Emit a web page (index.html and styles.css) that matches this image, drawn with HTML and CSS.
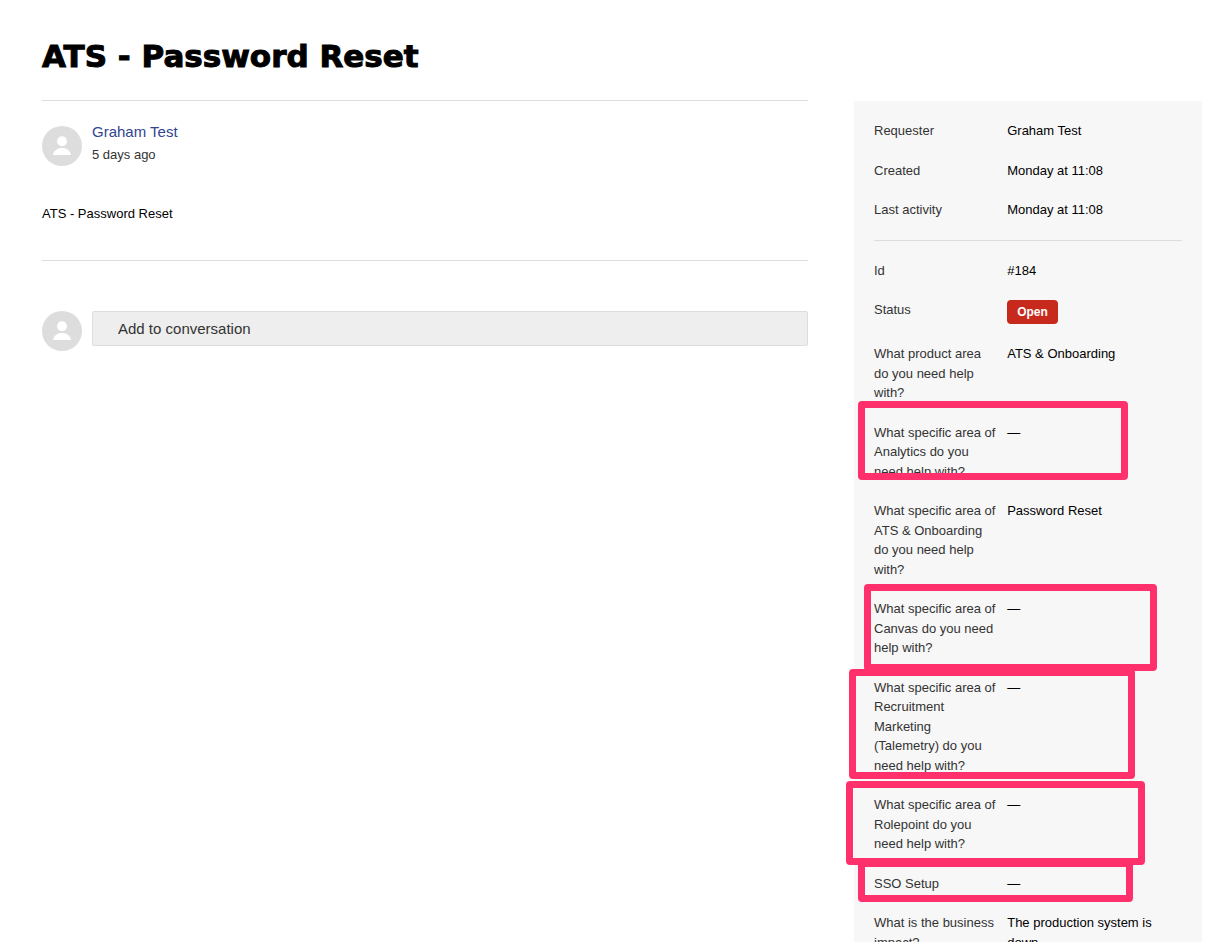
FILE: index.html
```
<!DOCTYPE html>
<html lang="en">
<head>
  <meta charset="UTF-8">
  <meta name="viewport" content="width=device-width, initial-scale=1.0">
  <title>ATS - Password Reset</title>
  <link rel="stylesheet" href="styles.css">
</head>
<body>
  <h1 class="request-title">ATS - Password Reset</h1>

  <div class="request-container">
    <main class="request-main">
      <article class="comment">
        <div class="comment-author">
          <svg class="avatar" viewBox="0 0 40 40" aria-hidden="true">
            <circle cx="20" cy="20" r="20" fill="#ddd"/>
            <circle cx="20" cy="15.3" r="5" fill="#fff"/>
            <path d="M11 29c.8-4.3 4.1-7 9-7s8.2 2.7 9 7z" fill="#fff"/>
          </svg>
          <div class="comment-meta">
            <a class="comment-name" href="#">Graham Test</a>
            <time class="comment-time">5 days ago</time>
          </div>
        </div>
        <p class="comment-body">ATS - Password Reset</p>
      </article>

      <form class="reply">
        <svg class="avatar" viewBox="0 0 40 40" aria-hidden="true">
          <circle cx="20" cy="20" r="20" fill="#ddd"/>
          <circle cx="20" cy="15.3" r="5" fill="#fff"/>
          <path d="M11 29c.8-4.3 4.1-7 9-7s8.2 2.7 9 7z" fill="#fff"/>
        </svg>
        <input class="reply-input" type="text" placeholder="Add to conversation" aria-label="Add to conversation">
      </form>
    </main>

    <aside class="request-sidebar">
      <dl class="request-details">
        <div class="detail"><dt>Requester</dt><dd>Graham Test</dd></div>
        <div class="detail"><dt>Created</dt><dd>Monday at 11:08</dd></div>
        <div class="detail"><dt>Last activity</dt><dd>Monday at 11:08</dd></div>
      </dl>

      <dl class="request-details">
        <div class="detail"><dt>Id</dt><dd>#184</dd></div>
        <div class="detail"><dt>Status</dt><dd><span class="status-label">Open</span></dd></div>
        <div class="detail"><dt>What product area do you need help with?</dt><dd>ATS &amp; Onboarding</dd></div>
        <div class="detail"><dt>What specific area of Analytics do you need help with?</dt><dd>—</dd></div>
        <div class="detail"><dt>What specific area of ATS &amp; Onboarding do you need help with?</dt><dd>Password Reset</dd></div>
        <div class="detail"><dt>What specific area of Canvas do you need help with?</dt><dd>—</dd></div>
        <div class="detail"><dt>What specific area of Recruitment Marketing (Talemetry) do you need help with?</dt><dd>—</dd></div>
        <div class="detail"><dt>What specific area of Rolepoint do you need help with?</dt><dd>—</dd></div>
        <div class="detail"><dt>SSO Setup</dt><dd>—</dd></div>
        <div class="detail"><dt>What is the business impact?</dt><dd>The production system is down.</dd></div>
      </dl>

      <!-- highlights over the empty fields -->
      <div class="marker marker-analytics"></div>
      <div class="marker marker-canvas"></div>
      <div class="marker marker-recruitment"></div>
      <div class="marker marker-rolepoint"></div>
      <div class="marker marker-sso"></div>
    </aside>
  </div>
</body>
</html>
```

FILE: styles.css
```
* {
  box-sizing: border-box;
}

body {
  height: 100vh;
  margin: 0;
  padding: 32px 25px 0 42px;
  overflow: hidden;
  background-color: #fff;
  color: #000;
  font-family: Arial, "Liberation Sans", sans-serif;
  font-size: 13px;
  line-height: 1.5;
}

.request-title {
  margin: 0 0 20px;
  font-family: "Arial Black", "DejaVu Sans", sans-serif;
  font-size: 31px;
  font-weight: 900;
  line-height: 48px;
  -webkit-text-stroke: 1px #000;
}

.request-container {
  display: flex;
  justify-content: space-between;
  align-items: flex-start;
}

/* Conversation */
.request-main {
  width: 66%;
}

.comment {
  border-top: 1px solid #ddd;
  border-bottom: 1px solid #ddd;
  padding: 20px 0 36px;
}

.comment-author {
  display: flex;
  align-items: flex-end;
  gap: 10px;
}

.avatar {
  flex: none;
  display: block;
  width: 40px;
  height: 40px;
}

.comment-meta {
  display: flex;
  flex-direction: column;
  height: 45px;
}

.comment-name {
  color: #30458f;
  font-size: 15px;
  line-height: 21px;
  text-decoration: none;
}

.comment-time {
  color: #333;
  line-height: 26px;
}

.comment-body {
  margin: 38px 0 0;
  line-height: 20px;
}

.reply {
  display: flex;
  align-items: flex-start;
  gap: 10px;
  margin-top: 50px;
}

.reply-input {
  flex: 1;
  height: 35px;
  padding: 0 25px;
  border: 1px solid #ddd;
  border-radius: 2px;
  background-color: #eee;
  font-family: inherit;
  font-size: 15px;
}

.reply-input::placeholder {
  color: #333;
  opacity: 1;
}

/* Sidebar */
.request-sidebar {
  position: relative;
  width: 30%;
  margin-top: 1px;
  padding: 0 20px;
  background-color: #f7f7f7;
}

.request-details {
  display: grid;
  gap: 20px;
  margin: 0;
  padding: 20px 0;
}

.request-details + .request-details {
  border-top: 1px solid #ddd;
}

.detail {
  display: grid;
  grid-template-columns: 40% 1fr;
  column-gap: 10px;
}

.detail dt {
  color: #333;
}

.detail dd {
  margin: 0;
}

.status-label {
  display: block;
  width: fit-content;
  padding: 2px 10px;
  border-radius: 4px;
  background-color: #c72a1c;
  color: #fff;
  font-size: 12px;
  font-weight: bold;
  line-height: 20px;
}

/* Highlight boxes */
.marker {
  position: absolute;
  border: 7px solid #ff306c;
  border-radius: 4px;
}

.marker-analytics {
  top: 300px;
  left: 4px;
  width: 270px;
  height: 79px;
}

.marker-canvas {
  top: 483px;
  left: 10px;
  width: 293px;
  height: 87px;
}

.marker-recruitment {
  top: 568px;
  left: -5px;
  width: 286px;
  height: 110px;
}

.marker-rolepoint {
  top: 680px;
  left: -8px;
  width: 299px;
  height: 84px;
}

.marker-sso {
  top: 759px;
  left: 4px;
  width: 275px;
  height: 42px;
}
```
